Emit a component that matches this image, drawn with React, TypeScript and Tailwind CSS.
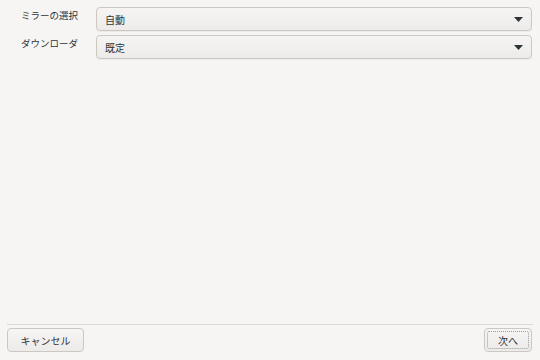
import { useState } from "react";

// ダイアログの選択肢
const fields = [
  { label: "ミラーの選択", value: "自動" },
  { label: "ダウンローダ", value: "既定" },
];

const font = { fontFamily: '"Noto Sans CJK JP", "Noto Sans", sans-serif' };

function Arrow() {
  return (
    <svg width="9" height="5" viewBox="0 0 9 5" className="shrink-0">
      <path d="M0 0h9L4.5 5z" fill="#2e3436" />
    </svg>
  );
}

export default function App() {
  const [sel] = useState(fields);

  return (
    <div
      className="w-[540px] h-[360px] bg-[#f6f5f4] text-[#2e3436] text-[10px] flex flex-col"
      style={font}
    >
      <div className="flex-1 pt-[7px] pr-[8px] flex flex-col gap-[4px]">
        {sel.map((f) => (
          <div key={f.label} className="flex items-start">
            <div className="w-[78px] text-right pt-[1px] leading-[14px] text-[9.5px]">
              {f.label}
            </div>
            <div className="ml-[18px] flex-1 h-[24px] rounded-[4px] border border-[#cdc7c2] bg-gradient-to-b from-[#f6f5f4] to-[#edebe9] flex items-center justify-between pl-[8px] pr-[8px] shadow-[0_1px_0_rgba(0,0,0,0.04)]">
              <span>{f.value}</span>
              <Arrow />
            </div>
          </div>
        ))}
      </div>

      <div className="border-t border-[#dcd8d5] mx-[7px]" />
      <div className="flex justify-between items-center pl-[7px] pr-[8px] pt-[3px] pb-[8px]">
        <button className="w-[77px] h-[24px] rounded-[4px] border border-[#cdc7c2] bg-gradient-to-b from-[#f6f5f4] to-[#edebe9]">
          キャンセル
        </button>
        <button className="w-[48px] h-[24px] rounded-[4px] border border-[#cdc7c2] bg-gradient-to-b from-[#f6f5f4] to-[#edebe9] p-[2px]">
          <span className="w-full h-full rounded-[2px] border border-dotted border-[#9a9996] flex items-center justify-center">
            次へ
          </span>
        </button>
      </div>
    </div>
  );
}
